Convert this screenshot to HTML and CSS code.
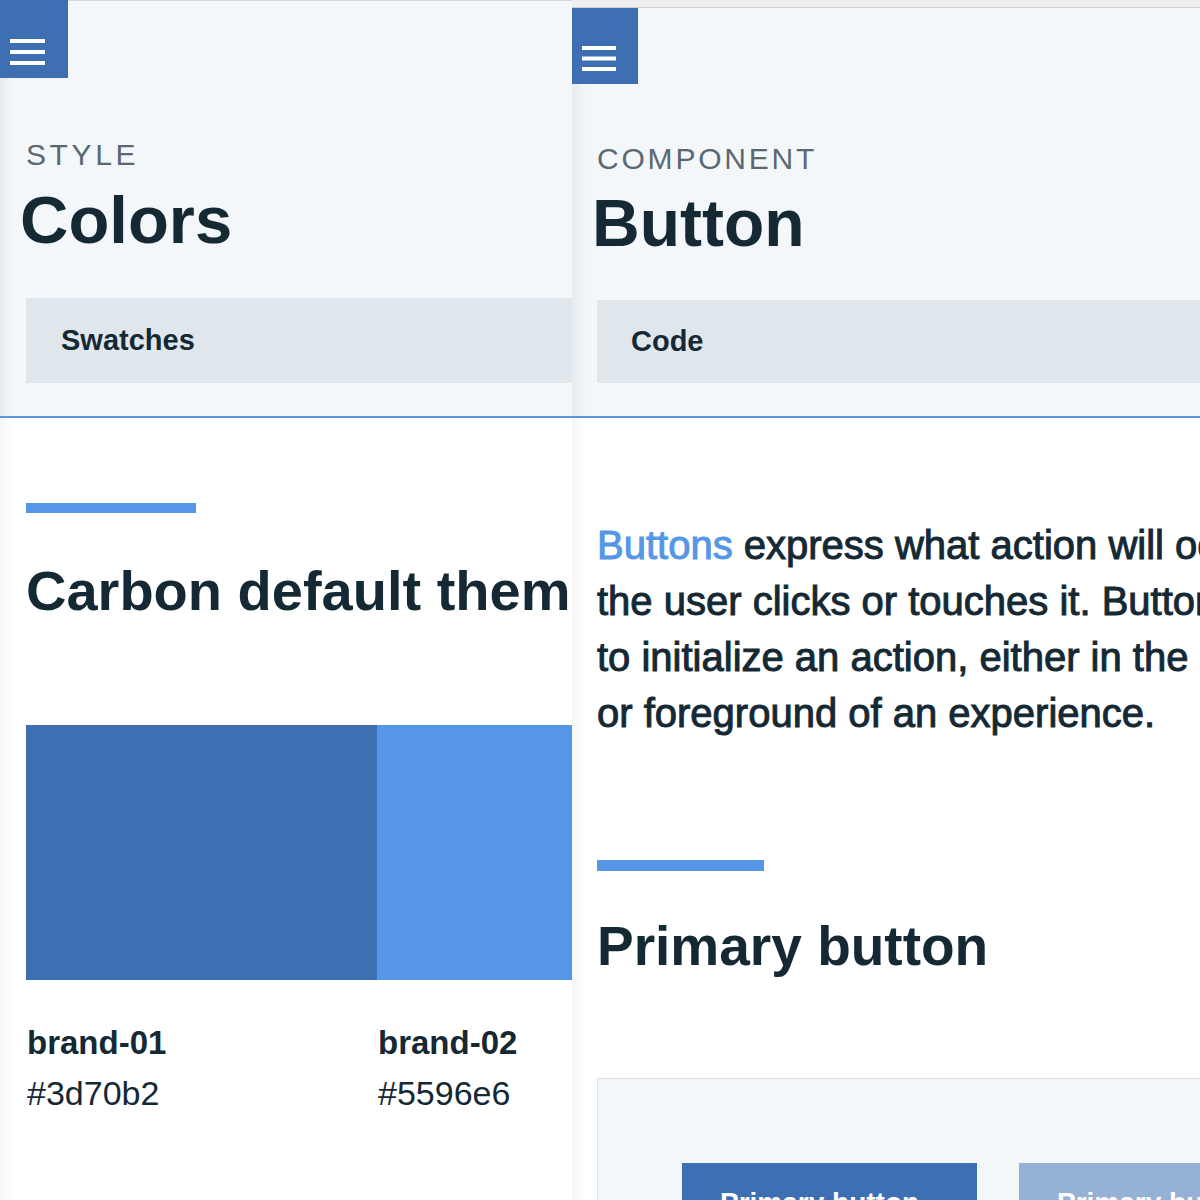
FILE: index.html
```html
<!DOCTYPE html>
<html lang="en">
<head>
<meta charset="utf-8">
<title>Carbon Design System</title>
<link rel="stylesheet" href="styles.css">
</head>
<body>
<div class="screen">
  <section class="panel panel-left">
    <header class="page-header page-header-left">
      <button class="menu-btn" aria-label="Menu">
        <svg width="35" height="26" viewBox="0 0 35 26"><rect x="0" y="0" width="35" height="4" fill="#fff"/><rect x="0" y="11" width="35" height="4" fill="#fff"/><rect x="0" y="22" width="35" height="4" fill="#fff"/></svg>
      </button>
      <div class="header-content">
        <p class="eyebrow">STYLE</p>
        <h1 class="page-title">Colors</h1>
        <nav class="tab-bar"><span class="tab">Swatches</span></nav>
      </div>
    </header>
    <main class="page-body">
      <div class="accent-bar"></div>
      <h2 class="section-title">Carbon default theme</h2>
      <div class="swatch-grid">
        <div class="swatch-col">
          <div class="swatch swatch-01"></div>
          <p class="swatch-name">brand-01</p>
          <p class="swatch-hex">#3d70b2</p>
        </div>
        <div class="swatch-col">
          <div class="swatch swatch-02"></div>
          <p class="swatch-name">brand-02</p>
          <p class="swatch-hex">#5596e6</p>
        </div>
      </div>
    </main>
  </section>

  <section class="panel panel-right">
    <div class="status-strip"></div>
    <header class="page-header page-header-right">
      <button class="menu-btn menu-btn-right" aria-label="Menu">
        <svg width="34" height="25" viewBox="0 0 34 25"><rect x="0" y="0" width="34" height="4" fill="#fff"/><rect x="0" y="10.5" width="34" height="4" fill="#fff"/><rect x="0" y="21" width="34" height="4" fill="#fff"/></svg>
      </button>
      <div class="header-content header-content-right">
        <p class="eyebrow eyebrow-right">COMPONENT</p>
        <h1 class="page-title page-title-right">Button</h1>
        <nav class="tab-bar tab-bar-right"><span class="tab">Code</span></nav>
      </div>
    </header>
    <main class="page-body page-body-right">
      <p class="intro"><a class="intro-link">Buttons</a> express what action will occur when<br>the user clicks or touches it. Buttons are used<br>to initialize an action, either in the background<br>or foreground of an experience.</p>
      <div class="accent-bar accent-bar-right"></div>
      <h2 class="section-title section-title-right">Primary button</h2>
      <div class="demo-box">
        <button class="bx-btn bx-btn-primary">Primary button</button>
        <button class="bx-btn bx-btn-disabled">Primary button</button>
      </div>
    </main>
  </section>
</div>
</body>
</html>
```

FILE: styles.css
```css
html, body {
  margin: 0;
  padding: 0;
  background: #ffffff;
}

body {
  font-family: "Liberation Sans", Arial, Helvetica, sans-serif;
  color: #152935;
}

p, h1, h2 {
  margin: 0;
}

.screen {
  display: flex;
  width: 1200px;
  height: 1200px;
  overflow: hidden;
}

.panel {
  height: 1200px;
  overflow: hidden;
  background: #ffffff;
}

.panel-left {
  width: 572px;
  flex: 0 0 572px;
}

.panel-right {
  flex: 1 1 auto;
  min-width: 0;
}

/* ---------- header ---------- */

.page-header {
  display: flow-root;
  background: #f4f7f9;
  border-bottom: 2px solid #5f96dc;
  padding-bottom: 33px;
  box-shadow: inset 16px 0 14px -12px rgba(0, 0, 0, 0.07);
}

.page-header-left {
  box-shadow: inset 16px 0 14px -12px rgba(0, 0, 0, 0.07), inset 0 1px 0 #d6d9db;
}

.status-strip {
  height: 7px;
  background: #eeeeee;
  border-bottom: 1px solid #cfd1d2;
}

.menu-btn {
  display: block;
  width: 68px;
  height: 78px;
  margin: 0;
  padding: 25px 0 0 10px;
  border: 0;
  background: #3d6fb2;
  box-sizing: border-box;
  text-align: left;
  line-height: 0;
}

.menu-btn-right {
  width: 66px;
  height: 76px;
  padding: 25px 0 0 10px;
}

.header-content {
  padding-left: 26px;
}

.header-content-right {
  padding-left: 25px;
}

.eyebrow {
  margin-top: 62px;
  font-size: 30px;
  line-height: 30px;
  font-weight: 400;
  letter-spacing: 3.6px;
  color: #5a6872;
}

.eyebrow-right {
  margin-top: 60px;
  letter-spacing: 2.8px;
}

.page-title {
  margin-top: 16px;
  margin-left: -6px;
  font-size: 67px;
  line-height: 67px;
  font-weight: 700;
  color: #152935;
}

.page-title-right {
  margin-top: 16px;
  margin-left: -5px;
  font-size: 66px;
  line-height: 66px;
}

.tab-bar {
  display: flex;
  align-items: center;
  height: 85px;
  margin-top: 45px;
  padding-left: 35px;
  background: #dfe6ec;
}

.tab-bar-right {
  height: 83px;
  margin-top: 44px;
  padding-left: 34px;
}

.tab {
  font-size: 29px;
  line-height: 29px;
  font-weight: 700;
  color: #152935;
}

/* ---------- body ---------- */

.page-body {
  display: flow-root;
  padding-left: 26px;
  box-shadow: inset 16px 0 14px -12px rgba(0, 0, 0, 0.05);
  height: 800px;
}

.page-body-right {
  padding-left: 25px;
}

.accent-bar {
  width: 170px;
  height: 10px;
  margin-top: 85px;
  background: #5596e6;
}

.accent-bar-right {
  width: 167px;
  height: 11px;
  margin-top: 119px;
}

.section-title {
  margin-top: 50px;
  font-size: 56px;
  line-height: 56px;
  font-weight: 700;
  white-space: nowrap;
  color: #152935;
}

.section-title-right {
  margin-top: 48px;
  font-size: 55px;
  line-height: 55px;
}

.swatch-grid {
  display: grid;
  grid-template-columns: 351px 351px;
  margin-top: 106px;
}

.swatch {
  height: 255px;
}

.swatch-01 {
  background: #3d70b2;
}

.swatch-02 {
  background: #5596e6;
}

.swatch-name {
  margin-top: 46px;
  padding-left: 1px;
  font-size: 33px;
  line-height: 33px;
  font-weight: 700;
  color: #152935;
}

.swatch-hex {
  margin-top: 17px;
  padding-left: 1px;
  font-size: 34px;
  line-height: 34px;
  font-weight: 400;
  color: #152935;
}

.intro {
  margin-top: 99px;
  font-size: 40px;
  line-height: 56px;
  font-weight: 400;
  -webkit-text-stroke: 1px #152935;
  white-space: nowrap;
  color: #152935;
}

.intro-link {
  color: #5596e6;
  -webkit-text-stroke: 1px #5596e6;
  text-decoration: none;
}

.demo-box {
  display: flex;
  gap: 42px;
  margin-top: 104px;
  padding: 84px 0 0 84px;
  height: 200px;
  background: #f4f7f9;
  border: 1px solid #dde2e6;
  border-right: 0;
}

.bx-btn {
  flex: 0 0 295px;
  width: 295px;
  height: 80px;
  margin: 0;
  padding: 0 0 0 38px;
  border: 0;
  text-align: left;
  font-family: "Liberation Sans", Arial, Helvetica, sans-serif;
  font-size: 28px;
  line-height: 28px;
  font-weight: 700;
  color: #ffffff;
}

.bx-btn-primary {
  background: #3d70b2;
}

.bx-btn-disabled {
  background: #95b2d6;
}
```
